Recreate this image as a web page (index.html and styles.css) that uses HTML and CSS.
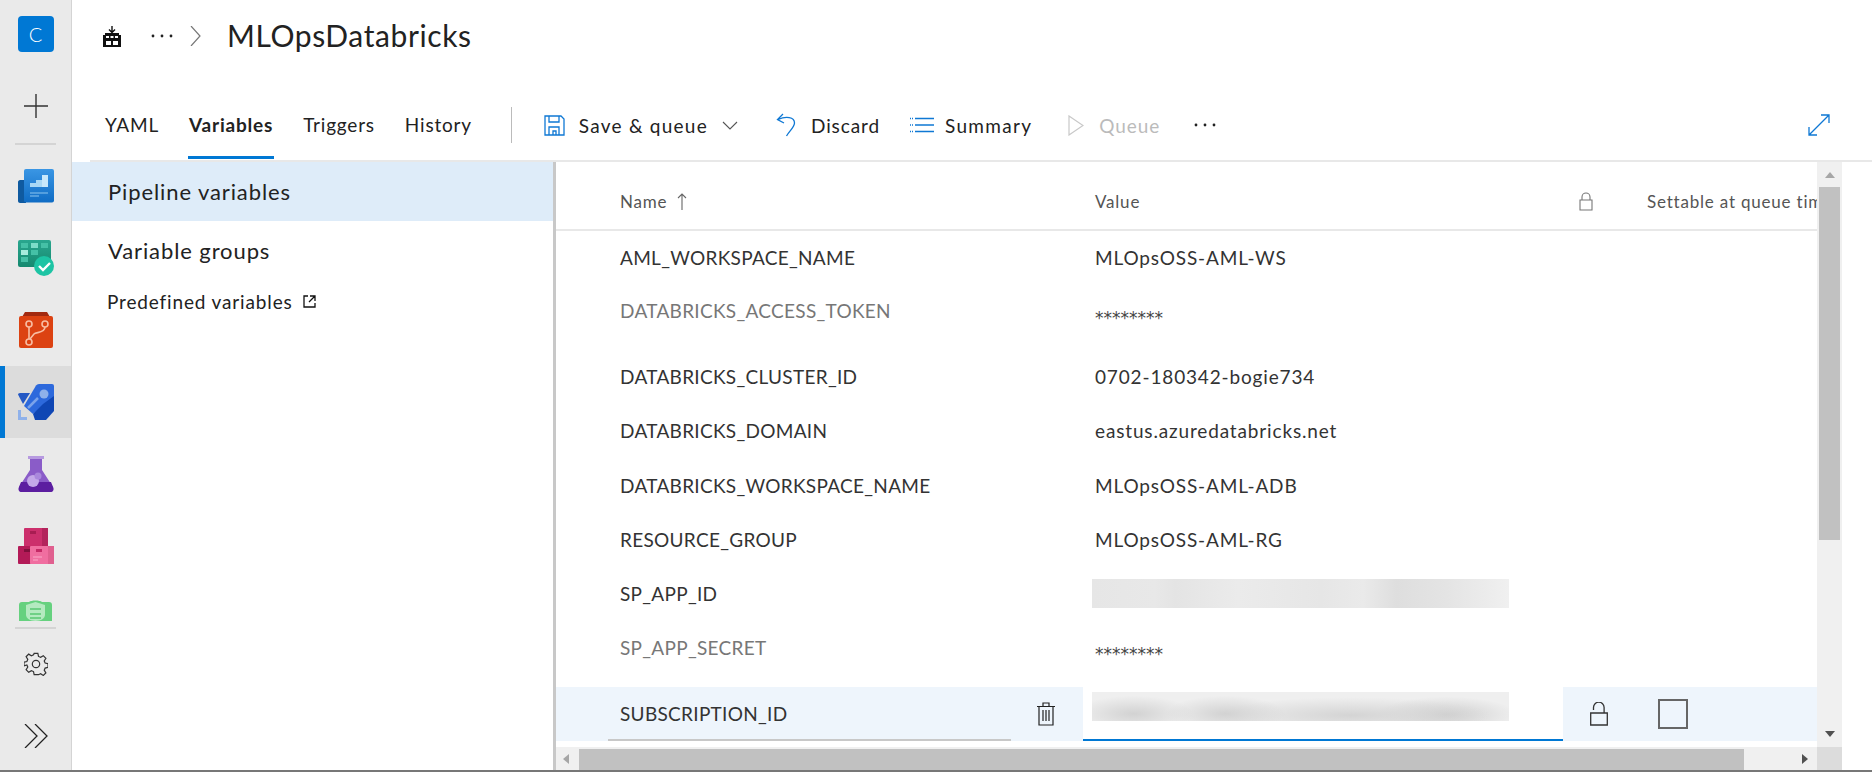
FILE: index.html
```html
<!DOCTYPE html>
<html lang="en">
<head>
<meta charset="utf-8">
<title>MLOpsDatabricks</title>
<link rel="stylesheet" href="styles.css">
</head>
<body>
<div class="app">
  <nav class="rail">
    <div class="rail-top">
      <div class="org">C</div>
      <div class="add"><svg width="24" height="24" viewBox="0 0 24 24"><path d="M12 0v24M0 12h24" stroke="#333" stroke-width="1.4"/></svg></div>
    </div>
    <div class="rail-sep"></div>
    <div class="rail-items">
      <div class="rail-item"><svg width="36" height="34" viewBox="0 0 36 34"><defs><linearGradient id="bd" x1="0" y1="0" x2="0" y2="1"><stop offset="0" stop-color="#3a96e4"/><stop offset="1" stop-color="#0f6cc4"/></linearGradient></defs><path d="M2 11h6v23H2c-1 0-2-1-2-2V13c0-1 1-2 2-2z" fill="#0f5aa0"/><rect x="6" y="0" width="30" height="33.500" rx="2" fill="url(#bd)"/><path d="M12 18v-4h6v-3h6V6h6v12z" fill="#a9d8f5"/><path d="M24 18V6h6v12z" fill="#c8e8fb"/><path d="M12 24h18M12 27h9" stroke="#8cc6ef" stroke-width="1"/></svg></div>
      <div class="rail-item"><svg width="36" height="36" viewBox="0 0 36 36"><defs><linearGradient id="tp" x1="0" y1="0" x2="0" y2="1"><stop offset="0" stop-color="#2aa78f"/><stop offset="1" stop-color="#15896f"/></linearGradient></defs><rect width="33" height="27" rx="2" fill="url(#tp)"/><path d="M3 3h7v5H3zM23 3h7v5h-7zM13 10h7v5h-7zM3 17h7v5H3z" fill="#45c0a6"/><path d="M13 3h7v5h-7z" fill="#7ddcc8"/><path d="M3 10h7v5H3z" fill="#a6ebdc"/><circle cx="26" cy="26" r="10" fill="#1dc4a4"/><path d="M21 26l4 4 7-7" fill="none" stroke="#fff" stroke-width="2.400"/></svg></div>
      <div class="rail-item"><svg width="34" height="36" viewBox="0 0 34 36"><path d="M6 0h22l3 5H3z" fill="#a32a10"/><rect y="4" width="34" height="32" rx="2" fill="#dc4212"/><circle cx="10" cy="12" r="3" fill="none" stroke="#f8bda3" stroke-width="1.600"/><circle cx="26" cy="12" r="3" fill="none" stroke="#f8bda3" stroke-width="1.600"/><circle cx="10" cy="30" r="3" fill="none" stroke="#f8bda3" stroke-width="1.600"/><path d="M26 15c0 6-9 5-11 7l-4 5" fill="none" stroke="#f8bda3" stroke-width="1.600"/><path d="M10 15v12" stroke="#f8bda3" stroke-width="1.600"/></svg></div>
      <div class="rail-item rail-active"><svg width="36" height="36" viewBox="0 0 36 36"><path d="M18 1.500Q19 0 21 0H34Q36 0 36 2V14L15 30 6 22z" fill="#2d69dc"/><path d="M0 10.500Q0 9 2 9H12L5 20z" fill="#2458c4"/><path d="M36 12V27L28 36H17L15 30 25 20z" fill="#0f46b4"/><circle cx="26" cy="10" r="4.500" fill="#8fb1ea"/><path d="M10 24l10-10" stroke="#7ba3ea" stroke-width="2.500"/><path d="M0 26h3v7h6v3H0z" fill="#8fb1ea"/></svg></div>
      <div class="rail-item"><svg width="36" height="36" viewBox="0 0 36 36"><path d="M10 0h16v3h-2v11l11 17c1 3 0 5-3 5H4c-3 0-4-2-3-5l11-17V3h-2z" fill="#8a5cc8"/><path d="M10 0h16v3H10z" fill="#b79ae0"/><path d="M3 26h30l2 5c1 3 0 5-3 5H4c-3 0-4-2-3-5z" fill="#5c1ea0"/><circle cx="15" cy="25" r="6" fill="#c3a8e8"/><circle cx="20" cy="20" r="3.500" fill="#a988dc"/></svg></div>
      <div class="rail-item"><svg width="36" height="36" viewBox="0 0 36 36"><rect x="6" width="24" height="19" rx="1" fill="#cc2f6c"/><rect x="24" width="6" height="19" fill="#b3245c"/><rect x="12" y="3" width="6" height="3" fill="#a81d52"/><rect y="18" width="13" height="18" rx="1" fill="#b31a57"/><rect x="12" y="18" width="24" height="18" rx="1" fill="#f06ea0"/><rect x="30" y="18" width="6" height="18" fill="#e0608f"/><rect x="6" y="21" width="6" height="3" fill="#80103c"/><rect x="18" y="21" width="6" height="3" fill="#c42a66"/><path d="M15 29h9M15 32h5" stroke="#fba8c8" stroke-width="1"/></svg></div>
      <div class="rail-item rail-clip"><svg width="33" height="21" viewBox="0 0 33 21"><path d="M0 5c0-2 1-3 3-3h7c2-2 11-2 13 0h7c2 0 3 1 3 3v16H0z" fill="#66d17f"/><path d="M7 5l9.500-3L26 5v10c0 3-4 6-9.500 6S7 18 7 15z" fill="#b4eac0"/><path d="M11 9h11M11 14h11M11 18h11" stroke="#58c872" stroke-width="1.600"/></svg></div>
    </div>
    <div class="rail-sep"></div>
    <div class="rail-tool"><svg width="24" height="24" viewBox="0 0 26 26"><path d="M11 1.500h4l.7 3.300 2.300 1 2.900-1.800 2.800 2.800-1.800 2.900 1 2.300 3.100.7v4l-3.100.7-1 2.300 1.800 2.900-2.800 2.800-2.900-1.800-2.300 1L15 24.500h-4l-.7-3.300-2.300-1-2.900 1.800-2.800-2.800 1.800-2.900-1-2.300L0 15v-4l3.100-.7 1-2.300-1.800-2.900 2.800-2.800 2.900 1.800 2.300-1z" fill="none" stroke="#333" stroke-width="1.300"/><circle cx="13" cy="13" r="4" fill="none" stroke="#333" stroke-width="1.300"/></svg></div>
    <div class="rail-tool rail-collapse"><svg width="24" height="24" viewBox="0 0 24 24"><path d="M1 0l12 12L1 24M11 0l12 12-12 12" fill="none" stroke="#222" stroke-width="1.300"/></svg></div>
  </nav>

  <main class="main">
    <header class="crumbs">
      <svg class="crumb-icon" width="18" height="21" viewBox="0 0 18 21"><path d="M9 0v6M6 3.500l3 3 3-3" fill="none" stroke="#111" stroke-width="1.400"/><path d="M0 21V9h2V7h14v2h2v12z" fill="#111"/><path d="M3 10h3v2H3zM7.500 10h3v2h-3zM12 10h3v2h-3zM3 15h5v4H3zM10 15h5v4h-5z" fill="#fff"/></svg>
      <svg class="crumb-dots" width="24" height="4" viewBox="0 0 24 4"><circle cx="3" cy="2" r="1.400" fill="#222"/><circle cx="12" cy="2" r="1.400" fill="#222"/><circle cx="21" cy="2" r="1.400" fill="#222"/></svg>
      <svg class="crumb-chev" width="11" height="20" viewBox="0 0 11 20"><path d="M1 0l9 10-9 10" fill="none" stroke="#777" stroke-width="1.200"/></svg>
      <h1 class="title">MLOpsDatabricks</h1>
    </header>

    <div class="toolbar">
      <div class="tabs">
        <span class="tab">YAML</span>
        <span class="tab tab-on">Variables</span>
        <span class="tab">Triggers</span>
        <span class="tab">History</span>
      </div>
      <div class="tool-sep"></div>
      <div class="cmd cmd-save">
        <svg width="21" height="21" viewBox="0 0 21 21"><path d="M1 1h16l3 3v16H1zM5 1v6h10V1M5 20v-8h10v8M9 20v-4h3v4" fill="none" stroke="#0f78d4" stroke-width="1.300"/></svg>
        <span>Save &amp; queue</span>
        <svg class="cmd-caret" width="16" height="9" viewBox="0 0 16 9"><path d="M1 1l7 7 7-7" fill="none" stroke="#555" stroke-width="1.100"/></svg>
      </div>
      <div class="cmd cmd-discard">
        <svg width="20" height="24" viewBox="0 0 20 24"><path d="M7 1L1.500 6.500 8 10M2 6.500C10 3 18.500 4 18.500 10c0 4-5 8-8 13" fill="none" stroke="#0f78d4" stroke-width="1.300"/></svg>
        <span>Discard</span>
      </div>
      <div class="cmd cmd-summary">
        <svg width="24" height="16" viewBox="0 0 24 16"><path d="M5 1.500h19M5 8h19M5 14.500h19" stroke="#0f78d4" stroke-width="1.400"/><path d="M0 1.500h3M0 8h3M0 14.500h3" stroke="#0f78d4" stroke-width="1.400" stroke-dasharray="1 1"/></svg>
        <span>Summary</span>
      </div>
      <div class="cmd cmd-queue">
        <svg width="16" height="21" viewBox="0 0 16 21"><path d="M1 1l14 9.500L1 20z" fill="none" stroke="#c8c8c8" stroke-width="1.200"/></svg>
        <span>Queue</span>
      </div>
      <svg class="cmd-more" width="24" height="4" viewBox="0 0 24 4"><circle cx="3" cy="2" r="1.400" fill="#222"/><circle cx="12" cy="2" r="1.400" fill="#222"/><circle cx="21" cy="2" r="1.400" fill="#222"/></svg>
      <svg class="expand" width="22" height="22" viewBox="0 0 22 22"><path d="M1 21L21 1M13 1h8v8M1 13v8h8" fill="none" stroke="#0f78d4" stroke-width="1.300"/></svg>
    </div>

    <div class="content">
      <aside class="side">
        <div class="side-item side-on">Pipeline variables</div>
        <div class="side-item">Variable groups</div>
        <div class="side-link">Predefined variables
          <svg width="13" height="13" viewBox="0 0 13 13"><path d="M5 1H1v11h11V8M7 1h5v5M12 1L6 7" fill="none" stroke="#111" stroke-width="1.300"/></svg>
        </div>
      </aside>

      <section class="panel">
        <div class="panel-view">
          <div class="table">
            <div class="row row-head">
              <div class="col-name head-name">Name
                <svg width="10" height="17" viewBox="0 0 10 17"><path d="M5 17V1M1 5l4-4 4 4" fill="none" stroke="#666" stroke-width="1.100"/></svg>
              </div>
              <div class="col-value">Value</div>
              <div class="col-lock"><svg width="14" height="19" viewBox="0 0 14 19"><path d="M1 8h12v10H1zM3 8V5a4 4 0 018 0v3" fill="none" stroke="#777" stroke-width="1.100"/></svg></div>
              <div class="col-queue">Settable at queue time</div>
            </div>
            <div class="row"><div class="col-name">AML_WORKSPACE_NAME</div><div class="col-value">MLOpsOSS-AML-WS</div></div>
            <div class="row row-secret"><div class="col-name">DATABRICKS_ACCESS_TOKEN</div><div class="col-value">********</div></div>
            <div class="row"><div class="col-name">DATABRICKS_CLUSTER_ID</div><div class="col-value">0702-180342-bogie734</div></div>
            <div class="row"><div class="col-name">DATABRICKS_DOMAIN</div><div class="col-value">eastus.azuredatabricks.net</div></div>
            <div class="row"><div class="col-name">DATABRICKS_WORKSPACE_NAME</div><div class="col-value">MLOpsOSS-AML-ADB</div></div>
            <div class="row"><div class="col-name">RESOURCE_GROUP</div><div class="col-value">MLOpsOSS-AML-RG</div></div>
            <div class="row"><div class="col-name">SP_APP_ID</div><div class="col-value"><div class="redact"></div></div></div>
            <div class="row row-secret"><div class="col-name">SP_APP_SECRET</div><div class="col-value">********</div></div>
            <div class="row row-edit">
              <div class="edit-name"><span>SUBSCRIPTION_ID</span></div>
              <div class="edit-trash"><svg width="18" height="24" viewBox="0 0 18 24"><path d="M0 4.500h18M6 4.500V1h6v3.500M2 4.500V23h14V4.500M6 8v11M9 8v11M12 8v11" fill="none" stroke="#222" stroke-width="1.200"/></svg></div>
              <div class="edit-value"><div class="redact redact-dark"></div></div>
              <div class="edit-lock"><svg width="18" height="24" viewBox="0 0 18 24"><path d="M.7 11h16.600v12H.7zM3.500 8V5.500a5.300 5.300 0 0110.600 0V11" fill="none" stroke="#333" stroke-width="1.300"/></svg></div>
              <div class="edit-check"><span class="check"></span></div>
            </div>
          </div>
          <div class="vbar">
            <span class="arrow-up"></span>
            <span class="vthumb"></span>
            <span class="arrow-down"></span>
          </div>
        </div>
        <div class="hbar">
          <span class="arrow-left"></span>
          <span class="hthumb"></span>
          <span class="arrow-right"></span>
          <span class="corner"></span>
        </div>
      </section>
    </div>
  </main>
</div>
</body>
</html>
```
FILE: styles.css
```css
* { box-sizing: border-box; }
html, body { margin: 0; height: 100%; overflow: hidden; }
body { font-family: Lato, "Open Sans", sans-serif; color: #222; background: #fff; }
.app { display: flex; width: 1872px; height: 772px; border-bottom: 2px solid #777; }

.rail { width: 72px; flex: none; background: #eaeaea; border-right: 1px solid #d4d4d4; display: flex; flex-direction: column; overflow: hidden; }
.rail-top { height: 143px; flex: none; display: flex; flex-direction: column; align-items: center; padding-top: 16px; }
.org { width: 36px; height: 36px; border-radius: 4px; background: #0078d4; color: #fff; font-size: 20px; font-weight: 300; display: flex; align-items: center; justify-content: center; }
.add { margin-top: 42px; height: 24px; }
.rail-sep { height: 2px; margin: 0 15px; background: #d4d4d4; flex: none; }
.rail-items { height: 482px; flex: none; overflow: hidden; padding-top: 5px; }
.rail-item { height: 72px; display: flex; align-items: center; justify-content: center; }
.rail-active { background: #dcdcdc; border-left: 5px solid #0078d4; padding-right: 5px; }
.rail-clip { height: 39px; align-items: flex-start; padding-top: 18px; overflow: hidden; }
.rail-tool { height: 70px; display: flex; align-items: center; justify-content: center; flex: none; }
.rail-collapse { height: 71px; padding-top: 3px; }

.main { flex: 1; min-width: 0; display: flex; flex-direction: column; }
.crumbs { height: 72px; padding-left: 31px; display: flex; align-items: center; flex: none; }
.crumb-icon { margin-right: 29px; }
.crumb-dots { margin-right: 16px; }
.crumb-chev { margin-right: 26px; }
.title { margin: -2px 0 0; font-size: 30px; font-weight: 400; color: #222; line-height: 1; letter-spacing: .6px; }

.toolbar { height: 90px; margin-left: 18px; display: flex; align-items: center; border-bottom: 2px solid #e8e8e8; flex: none; }
.tabs { display: flex; align-items: stretch; align-self: stretch; margin-left: 14px; gap: 28px; }
.tab { font-size: 19px; letter-spacing: .8px; padding: 20px 1px 0; display: flex; align-items: center; border-bottom: 3px solid transparent; margin-bottom: 1px; }
.tab-on { font-weight: 700; border-bottom-color: #0078d4; }
.tool-sep { width: 1px; height: 36px; background: #bbb; margin: 18px 0 0 38px; }
.cmd { display: flex; align-items: center; font-size: 19px; letter-spacing: .9px; margin-top: 18px; }
.cmd svg { flex: none; }
.cmd-save { margin-left: 32px; gap: 14px; letter-spacing: 1.250px; }
.cmd-discard { margin-left: 38px; gap: 15px; }
.cmd-summary { margin-left: 30px; gap: 11px; letter-spacing: 1.300px; }
.cmd-queue { margin-left: 36px; gap: 15px; color: #bbb; }
.cmd-more { margin: 18px 0 0 33px; flex: none; }
.expand { margin: 18px 42px 0 auto; flex: none; }

.content { flex: 1; min-height: 0; display: flex; }
.side { width: 481px; flex: none; }
.side-item { height: 59px; font-size: 22px; letter-spacing: .9px; padding-left: 36px; display: flex; align-items: center; color: #222; }
.side-on { background: #deecf9; }
.side-link { font-size: 19px; letter-spacing: .85px; padding: 0 0 0 35px; margin-top: 10px; display: flex; align-items: center; gap: 10px; color: #222; }

.panel { flex: 1; min-width: 0; border-left: 3px solid #c8c8c8; display: flex; flex-direction: column; margin-right: 30px; }
.panel-view { flex: 1; min-height: 0; display: flex; }
.table { width: 1261px; flex: none; overflow: hidden; }
.vbar { width: 25px; flex: none; background: #f0f0f0; display: flex; flex-direction: column; align-items: center; padding-top: 10px; }
.arrow-up { width: 0; height: 0; border: 5.500px solid transparent; border-top: 0; border-bottom: 6px solid #a6a6a6; flex: none; }
.vthumb { width: 21px; height: 353px; background: #c1c1c1; margin-top: 9px; flex: none; }
.arrow-down { width: 0; height: 0; border: 5.500px solid transparent; border-bottom: 0; border-top: 6px solid #505050; margin-top: auto; margin-bottom: 10px; flex: none; }
.hbar { height: 23px; flex: none; background: #f0f0f0; display: flex; align-items: center; }
.arrow-left { width: 0; height: 0; border: 5.500px solid transparent; border-left: 0; border-right: 6px solid #a6a6a6; margin-left: 7px; flex: none; }
.hthumb { width: 1165px; height: 21px; margin-left: 10px; margin-top: 2px; background: #c1c1c1; flex: none; }
.arrow-right { width: 0; height: 0; border: 5.500px solid transparent; border-right: 0; border-left: 6px solid #505050; margin-left: 58px; flex: none; }
.corner { width: 25px; align-self: stretch; background: #dcdcdc; margin-left: auto; flex: none; }

.row { display: grid; grid-template-columns: 539px 480px; height: 54.300px; align-items: center; font-size: 19px; letter-spacing: .3px; color: #333; white-space: nowrap; }
.row-head { height: 69px; grid-template-columns: 539px 476px 76px 1fr; border-bottom: 2px solid #e8e8e8; font-size: 17px; letter-spacing: .8px; color: #555; padding-top: 11px; }
.row-secret { height: 65px; }
.row-secret .col-name { color: #777; margin-top: -12px; }
.row-secret .col-value { font-family: "DejaVu Sans", sans-serif; font-size: 17px; letter-spacing: 0; color: #444; margin-top: 2px; }
.col-name { padding: 0 0 2px 64px; }
.col-value { letter-spacing: .85px; padding-bottom: 2px; }
.row-head .col-name, .row-head .col-value { letter-spacing: .8px; padding-bottom: 0; }
.head-name { display: flex; align-items: center; gap: 10px; }
.col-lock { display: flex; padding-left: 8px; }
.col-queue { overflow: hidden; }
.redact { width: 417px; height: 29px; margin-left: -3px; background: linear-gradient(90deg, #e6e6e6, #e8e8e8 15%, #e4e4e4 20%, #ebebeb 35%, #e6e6e6 55%, #eaeaea 65%, #dedede 73%, #e4e4e4 85%, #f0f0f0 100%); }
.redact-dark { margin-left: 0; background: radial-gradient(ellipse 60px 18px at 10% 75%, #d2d2d2, transparent), radial-gradient(ellipse 60px 18px at 32% 75%, #d2d2d2, transparent), radial-gradient(ellipse 140px 18px at 62% 80%, #d4d4d4, transparent), radial-gradient(ellipse 70px 18px at 85% 78%, #cfcfcf, transparent), #efefef; }
.row-edit { grid-template-columns: 455px 72px 480px 95px 1fr; align-items: stretch; background: #eef5fc; }
.edit-name { padding-left: 52px; display: flex; }
.edit-name span { flex: 1; border-bottom: 2px solid #c8c8c8; padding: 1px 0 0 12px; display: flex; align-items: center; }
.edit-trash { display: flex; align-items: center; padding-left: 26px; }
.edit-value { background: #fff; border-bottom: 2px solid #0078d4; padding: 5px 0 0 9px; }
.edit-lock { display: flex; align-items: center; padding-left: 27px; }
.edit-check { display: flex; align-items: center; }
.check { width: 30px; height: 30px; border: 2px solid #666; }
```
